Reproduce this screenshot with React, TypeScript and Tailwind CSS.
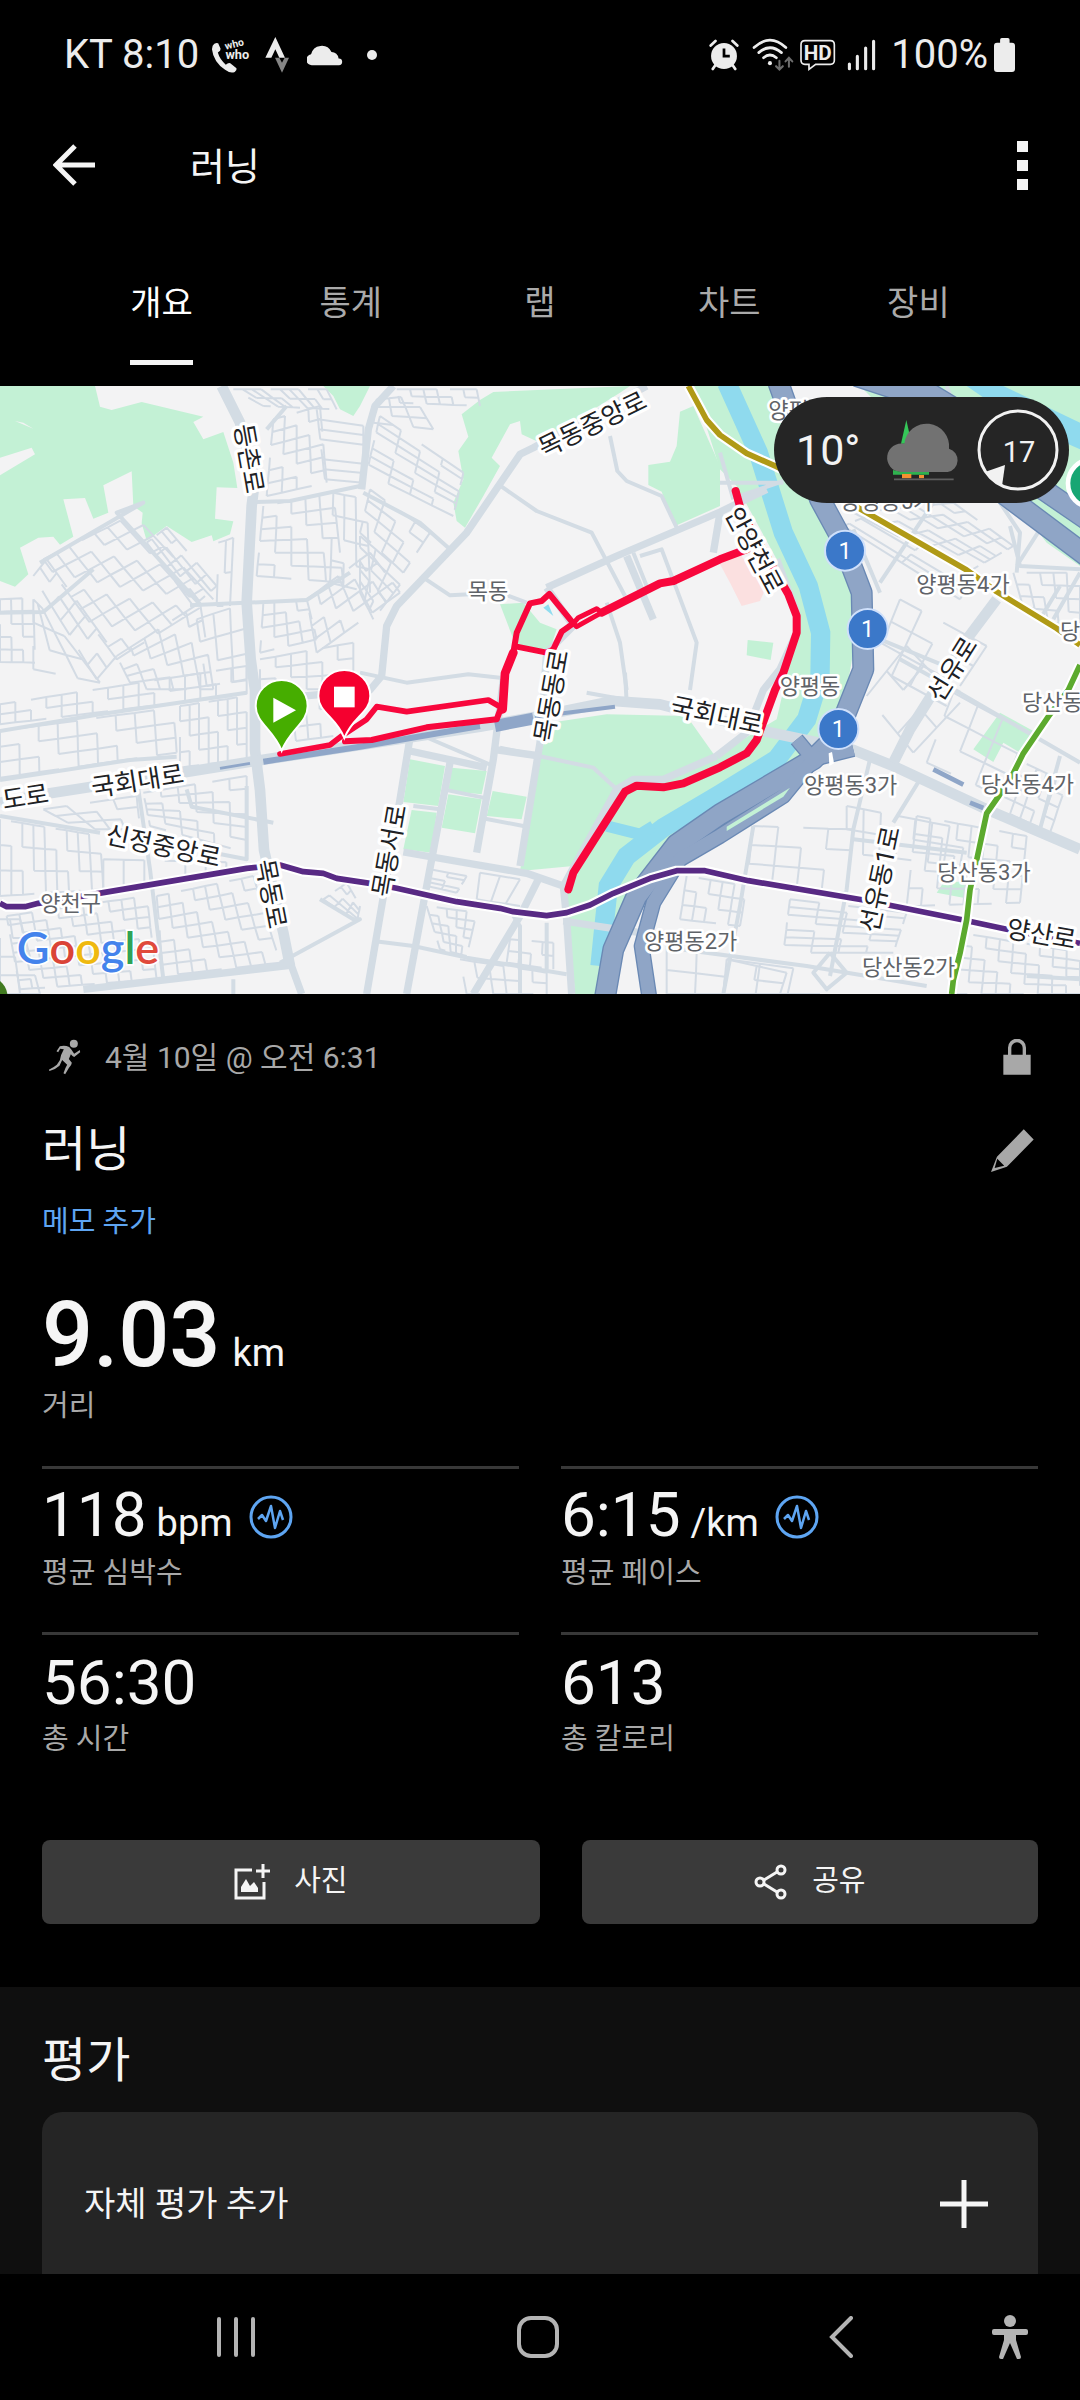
import type { ReactNode } from 'react';

type Point = [number, number];

interface StreetBlock {
  corners: [Point, Point, Point, Point];
  cols: number;
  rows: number;
}

interface MapLabel {
  text: string;
  x: number;
  y: number;
  rotate?: number;
  start?: boolean;
}

const TABS = ['개요', '통계', '랩', '차트', '장비'];

const STATS = [
  { value: '118', unit: 'bpm', label: '평균 심박수', chart: true },
  { value: '6:15', unit: '/km', label: '평균 페이스', chart: true },
  { value: '56:30', unit: '', label: '총 시간', chart: false },
  { value: '613', unit: '', label: '총 칼로리', chart: false },
];

// 골목길 블록: 좌상, 우상, 우하, 좌하 순서
const BLOCKS: StreetBlock[] = [
  { corners: [[130, 520], [400, 385], [640, 640], [350, 820]], cols: 7, rows: 8 },
  { corners: [[100, 570], [140, 520], [350, 810], [290, 880]], cols: 2, rows: 7 },
  { corners: [[350, 810], [600, 650], [640, 910], [400, 910]], cols: 6, rows: 5 },
  { corners: [[0, 640], [100, 635], [105, 830], [0, 828]], cols: 3, rows: 5 },
  { corners: [[100, 640], [140, 680], [300, 890], [100, 850]], cols: 3, rows: 3 },
  { corners: [[440, 470], [500, 425], [650, 600], [580, 660]], cols: 4, rows: 5 },
  { corners: [[655, 470], [700, 455], [690, 660], [650, 660]], cols: 2, rows: 2 },
  { corners: [[590, 700], [740, 650], [740, 880], [620, 900]], cols: 3, rows: 3 },
  { corners: [[700, 10], [980, 10], [1010, 70], [790, 60]], cols: 10, rows: 2 },
  { corners: [[820, 100], [960, 60], [980, 290], [800, 330]], cols: 4, rows: 6 },
  { corners: [[950, 70], [1090, 90], [1090, 290], [975, 280]], cols: 1, rows: 7 },
  { corners: [[790, 360], [1000, 320], [1030, 590], [770, 570]], cols: 5, rows: 6 },
  { corners: [[1000, 320], [1100, 340], [1110, 620], [990, 590]], cols: 3, rows: 4 },
  { corners: [[790, 650], [920, 640], [950, 760], [780, 800]], cols: 4, rows: 4 },
  { corners: [[920, 640], [1110, 500], [1200, 620], [950, 800]], cols: 6, rows: 4 },
  { corners: [[780, 820], [1060, 770], [1060, 910], [780, 910]], cols: 6, rows: 3 },
  { corners: [[1140, 90], [1390, 260], [1360, 390], [1100, 260]], cols: 4, rows: 7 },
  { corners: [[1190, 10], [1430, 10], [1440, 60], [1200, 50]], cols: 6, rows: 2 },
  { corners: [[1130, 40], [1240, 30], [1300, 130], [1120, 110]], cols: 3, rows: 3 },
  { corners: [[1110, 310], [1290, 440], [1210, 560], [1080, 440]], cols: 4, rows: 4 },
  { corners: [[1080, 450], [1220, 570], [1120, 700], [1080, 620]], cols: 3, rows: 5 },
  { corners: [[0, 955], [740, 840], [740, 925], [0, 1015]], cols: 16, rows: 2 },
  { corners: [[0, 1035], [520, 965], [530, 1100], [0, 1175]], cols: 9, rows: 3 },
  { corners: [[540, 960], [740, 930], [740, 1120], [540, 1145]], cols: 7, rows: 4 },
  { corners: [[130, 1270], [410, 1230], [420, 1330], [240, 1330]], cols: 4, rows: 3 },
  { corners: [[430, 1220], [740, 1170], [740, 1400], [450, 1320]], cols: 6, rows: 6 },
  { corners: [[0, 1300], [300, 1350], [310, 1510], [0, 1530]], cols: 9, rows: 3 },
  { corners: [[310, 1420], [740, 1430], [740, 1440], [310, 1510]], cols: 7, rows: 1 },
  { corners: [[20, 1590], [440, 1530], [470, 1780], [60, 1810]], cols: 11, rows: 8 },
  { corners: [[470, 1530], [760, 1470], [840, 1730], [490, 1770]], cols: 8, rows: 7 },
  { corners: [[830, 950], [1000, 920], [1000, 1050], [850, 1070]], cols: 4, rows: 3 },
  { corners: [[970, 1540], [1040, 1490], [1080, 1560], [1070, 1610]], cols: 4, rows: 3 },
  { corners: [[1290, 1450], [1400, 1470], [1370, 1520], [1280, 1500]], cols: 2, rows: 4 },
  { corners: [[1280, 1560], [1430, 1580], [1400, 1710], [1320, 1690]], cols: 5, rows: 5 },
  { corners: [[1440, 1460], [1620, 1490], [1560, 1560], [1430, 1540]], cols: 3, rows: 1 },
  { corners: [[1530, 1660], [1660, 1670], [1660, 1750], [1520, 1730]], cols: 4, rows: 2 },
  { corners: [[1380, 1720], [1640, 1760], [1640, 1824], [1400, 1824]], cols: 6, rows: 2 },
  { corners: [[2560, 380], [2860, 350], [3040, 480], [2900, 560]], cols: 8, rows: 5 },
  { corners: [[2530, 420], [2600, 390], [2920, 570], [2880, 640]], cols: 4, rows: 2 },
  { corners: [[3040, 560], [3240, 560], [3240, 720], [3080, 700]], cols: 5, rows: 4 },
  { corners: [[2700, 640], [2960, 780], [2840, 960], [2620, 840]], cols: 4, rows: 3 },
  { corners: [[2600, 930], [2720, 780], [2880, 950], [2740, 1100]], cols: 2, rows: 3 },
  { corners: [[2860, 920], [3080, 1040], [3000, 1230], [2780, 1130]], cols: 3, rows: 3 },
  { corners: [[3050, 1120], [3200, 1190], [3150, 1340], [3000, 1270]], cols: 5, rows: 4 },
  { corners: [[2540, 1260], [2900, 1330], [2880, 1440], [2540, 1400]], cols: 7, rows: 2 },
  { corners: [[2750, 1290], [3080, 1350], [3060, 1550], [2720, 1560]], cols: 8, rows: 5 },
  { corners: [[2260, 1320], [2560, 1330], [2540, 1520], [2240, 1490]], cols: 4, rows: 3 },
  { corners: [[2060, 1470], [2240, 1500], [2220, 1620], [2040, 1600]], cols: 5, rows: 3 },
  { corners: [[2370, 1540], [2720, 1580], [2680, 1700], [2350, 1700]], cols: 4, rows: 7 },
  { corners: [[2000, 1680], [2360, 1760], [2340, 1824], [2000, 1824]], cols: 4, rows: 2 },
  { corners: [[2880, 1640], [3240, 1700], [3240, 1824], [2860, 1824]], cols: 9, rows: 5 },
  { corners: [[2180, 1720], [2480, 1760], [2460, 1824], [2170, 1824]], cols: 3, rows: 1 },
  { corners: [[0, 1600], [60, 1600], [120, 1824], [0, 1824]], cols: 2, rows: 4 },
];

const MID_ROADS = [
  'M0 1035 L300 985 L740 920',
  'M0 1182 L390 1122 L530 1112',
  'M0 1290 L300 1340',
  'M415 1210 L450 1450 L490 1780',
  'M560 1210 L575 1262 L820 1310',
  'M740 1200 L740 1420 L640 1400',
  'M770 348 L870 345 L1080 300',
  'M800 130 L860 60',
  'M570 658 L920 642 L1050 560',
  'M120 530 L430 350 L350 380 L600 655',
  'M0 680 L130 678 L280 550',
  'M1090 320 L1260 410 L1350 490',
  'M1505 302 L1610 375 L1775 440 L1875 630 M1820 650 L1860 770 L1880 912',
  'M1830 150 L1852 255 L1880 285 L1985 330 L2030 425',
  'M1270 575 L1350 628 L1500 620 L1580 650',
  'M1080 860 L1220 890 L1405 865 L1500 875',
  'M1900 500 L1940 600 M1920 510 L1985 490 L2090 770 L2070 912',
  'M840 1730 L1080 1600 L1060 1600 L960 1540',
  'M700 1780 L700 1824 M1640 1610 L1640 1750',
  'M1120 1665 L1240 1680 L1400 1715 L1700 1765',
  'M1760 920 L1880 942 M1875 860 L1880 950',
  'M1240 1260 L1320 1270 M1270 1050 L1480 1140',
  'M1440 1295 L1570 1320 M1330 1210 L1450 1235 M1500 1085 L1780 1145 L1850 1210 L1920 1180',
  'M1540 1590 L1560 1620 L1560 1830',
  'M2160 290 L2350 290 M2160 200 L2200 340 M2220 330 L2350 285',
  'M2640 590 L2800 350 M2640 620 L2560 430',
  'M2640 760 L2860 850',
  'M2840 0 L2870 80',
  'M3030 420 L3060 540 L3240 550 M3050 540 L3120 430 M3000 350 L3060 440 L3050 560',
  'M3160 700 L3240 560 M3120 700 L3180 600',
  'M2860 910 L3240 1130 M2880 920 L2700 820',
  'M2610 1120 L2560 1330 L2540 1510 L2490 1770',
  'M2260 1320 L2220 1560 L2170 1824',
  'M2560 1360 L2900 1400 M2680 1310 L2760 1180',
  'M2040 1690 L2420 1740 L2780 1800',
  'M2490 1700 L2440 1760 L2480 1810 L2540 1760 L2490 1700',
  'M3180 1110 L3120 1330 M3240 1780 L3080 1770',
];

const ROAD_LABELS: MapLabel[] = [
  { text: '등촌로', x: 746, y: 218, rotate: 80 },
  { text: '목동중앙로', x: 1778, y: 116, rotate: -26 },
  { text: '안양천로', x: 2262, y: 494, rotate: 62 },
  { text: '선유로', x: 2858, y: 850, rotate: -58 },
  { text: '목동동로', x: 1656, y: 930, rotate: -80 },
  { text: '국회대로', x: 2150, y: 990, rotate: 12 },
  { text: '도로', x: 76, y: 1234, rotate: -9 },
  { text: '국회대로', x: 413, y: 1186, rotate: -9 },
  { text: '신정중앙로', x: 490, y: 1382, rotate: 12 },
  { text: '목동로', x: 812, y: 1524, rotate: 79 },
  { text: '목동서로', x: 1170, y: 1394, rotate: -80 },
  { text: '선유동1로', x: 2642, y: 1480, rotate: -78 },
  { text: '양산로', x: 3124, y: 1646, rotate: 10 },
];

const AREA_LABELS: MapLabel[] = [
  { text: '목동', x: 1464, y: 616 },
  { text: '양평동6가', x: 2305, y: 72, start: true },
  { text: '양평동5가', x: 2660, y: 345 },
  { text: '양평동4가', x: 2889, y: 594 },
  { text: '양평동', x: 2430, y: 900 },
  { text: '양평동3가', x: 2552, y: 1197 },
  { text: '양평동2가', x: 2072, y: 1666 },
  { text: '당', x: 3180, y: 735, start: true },
  { text: '당산동', x: 3066, y: 948, start: true },
  { text: '당산동4가', x: 3082, y: 1195 },
  { text: '당산동3가', x: 2952, y: 1460 },
  { text: '당산동2가', x: 2726, y: 1744 },
  { text: '양천구', x: 212, y: 1552 },
];

const SHIELDS: Point[] = [[2535, 494], [2603, 729], [2515, 1029]];

const lerp = (a: Point, b: Point, t: number): Point => [
  a[0] + (b[0] - a[0]) * t,
  a[1] + (b[1] - a[1]) * t,
];

const blockPath = ({ corners: [tl, tr, br, bl], cols, rows }: StreetBlock) => {
  const at = (i: number, j: number) => {
    const [x, y] = lerp(lerp(tl, tr, i / cols), lerp(bl, br, i / cols), j / rows);
    return `${Math.round(x)} ${Math.round(y)}`;
  };
  // 격자가 너무 규칙적으로 보이지 않게 일부 구간은 건너뛴다
  const skip = (i: number, j: number, k: number) => (i * 7 + j * 13 + k * 5 + cols * 3) % 4 === 0;

  let d = '';
  for (let j = 0; j <= rows; j++) {
    for (let i = 0; i <= cols; i++) {
      if (i < cols && !skip(i, j, 1)) d += `M${at(i, j)}L${at(i + 1, j)}`;
      if (j < rows && !skip(i, j, 2)) d += `M${at(i, j)}L${at(i, j + 1)}`;
    }
  }
  return d;
};

function Label({ label, road }: { label: MapLabel; road?: boolean }) {
  return (
    <text
      x={label.x}
      y={label.y}
      transform={label.rotate ? `rotate(${label.rotate} ${label.x} ${label.y})` : undefined}
      textAnchor={label.start ? 'start' : 'middle'}
      dominantBaseline="central"
      fontSize={road ? 76 : 66}
      fill={road ? '#202124' : '#5f6368'}
      stroke="#ffffff"
      strokeWidth={road ? 20 : 16}
      strokeLinejoin="round"
      paintOrder="stroke"
    >
      {label.text}
    </text>
  );
}

function RouteMap() {
  return (
    <svg
      viewBox="0 0 3240 1824"
      preserveAspectRatio="xMidYMid slice"
      className="block h-[608px] w-full"
      role="img"
      aria-label="러닝 경로 지도"
    >
      <rect width="3240" height="1824" fill="#f3f3f4" />

      {/* 공원 */}
      <g fill="#c3f1d5">
        <path d="M0 0H285L300 62L335 72L425 48L610 92L580 108L610 160L670 138L700 230L712 306L650 304L645 398L700 406L690 445L640 466L635 448L575 468L500 420L440 464L425 412L428 380L400 360L395 256L310 298L325 380L280 398L255 336L190 340L220 452L180 476L160 452L115 455L60 485L85 565L45 602L0 585Z" />
        <path d="M970 0H1110L1080 60L1060 90L1020 70L1000 30Z" />
        <path d="M1890 0L1480 18L1440 42L1385 85L1405 152L1375 195L1390 280L1360 350L1370 405L1395 425L1450 330L1500 240L1475 215L1530 115L1560 105L1565 145L1620 170L1860 20Z" />
        <path d="M2080 0H2330L2450 347L2560 617V797L2540 912L2460 1080L2400 1200L2160 1360L1990 1480L1880 1620L1830 1824H1725L1700 1520L1720 1440L1560 1455L1620 1110L1650 1010L1820 985L2060 990L2145 1110L2330 1000L2390 740V680L2330 520L2210 300L2160 250Z" />
        <path d="M2040 77L2080 60L2160 240V360L2025 420L1985 317L1945 297V237L2010 227L2030 180Z" />
        <path d="M2580 0H3240V540L3140 470L2880 130L2640 60Z" />
        <path d="M1230 1120L1335 1140L1315 1260L1210 1248Z M1355 1145L1460 1155L1445 1225L1345 1215Z M1345 1225L1445 1240L1425 1342L1325 1325Z M1478 1215L1580 1232L1565 1300L1460 1290Z M1235 1272L1310 1280L1295 1400L1210 1390Z" />
        <path d="M1500 655L1570 650L1620 710L1670 730L1650 790L1550 785Z" />
        <path d="M2243 762L2320 770L2312 822L2240 808Z" />
        <path d="M3000 980L3100 1035L3060 1100L3010 1070L2980 1128L2920 1090Z M2830 1490L2910 1485L2890 1535L2810 1520Z" />
      </g>
      <path d="M0 215L95 185L105 205L0 268Z M45 105L70 110L100 128Z" fill="#f3f3f4" />
      <path d="M2160 535L2215 500L2250 540L2300 600L2280 645L2225 660L2190 590Z" fill="#fbe0e0" />
      <path d="M1630 665L1645 655L1660 690Z" fill="#8fdcef" />

      {/* 하천 */}
      <path d="M2180 -10L2275 200L2350 440L2425 600L2462 740L2460 870L2420 1000L2330 1120L2160 1225L1990 1325L1880 1410L1825 1500L1810 1640L1800 1740" fill="none" stroke="#8fdaee" strokeWidth="58" />
      <path d="M1820 1320L1920 1345L1960 1320" fill="none" stroke="#8fdaee" strokeWidth="34" />
      <path d="M2900 0H3010L3240 110V190L3060 110Z" fill="#8fdaee" />

      {/* 골목길 */}
      <g fill="none" stroke="#d3dbe4" strokeWidth="6" strokeLinejoin="round">
        {BLOCKS.map((block, index) => (
          <path key={index} d={blockPath(block)} />
        ))}
      </g>

      {/* 일반 도로 */}
      <g fill="none" stroke="#d3dce4" strokeLinejoin="round">
        <g strokeWidth="12">
          {MID_ROADS.map(d => (
            <path key={d} d={d} />
          ))}
        </g>
        <g strokeWidth="22">
          <path d="M1180 0L1125 60L1105 130L1085 310" />
          <path d="M1940 0L1600 185L1560 205L1400 440L1190 660L1160 720L1145 870L1110 912L800 940" />
          <path d="M1640 605L1850 510L2160 378L2300 310" />
          <path d="M1640 605L1720 720L1640 800L1620 1070L1560 1440" />
          <path d="M1230 1055L1200 1240L1100 1824" />
          <path d="M1510 880L1480 1120L1430 1400M1350 1130L1280 1500L1220 1824" />
          <path d="M1230 1095L1460 1145M1480 1090L1620 1110" />
          <path d="M1210 1398L1580 1462L1690 1500L1700 1600L1715 1824" />
          <path d="M1620 1470L1560 1590L1420 1824" />
          <path d="M1690 1500L1850 1210L1900 1180L1990 1180L2150 1110" />
          <path d="M2140 500L2160 380M2330 520L2390 680V740L2340 850L2290 912L2240 1040L2150 1110" />
          <path d="M1690 1605L1920 1640L2000 1650M1880 510L1960 700" />
          <path d="M250 1810L870 1738M860 1700L905 1824" />
        </g>
        <g strokeWidth="32">
          <path d="M665 0L720 110L765 280L755 360L740 650L752 820L765 912V1092L780 1212L792 1392L850 1640L870 1740" />
          <path d="M0 1250L150 1222L560 1158L760 1126L1440 1022L1620 990L1840 945L1980 955L2290 1035L2560 1092L2680 1140L2960 1270L3240 1390" />
          <path d="M2990 640L2900 760L2730 1030L2680 1130" />
        </g>
      </g>

      {/* 고속화도로 */}
      <g fill="none" stroke="#8fa6c8">
        <path d="M660 1147L750 1132" strokeWidth="8" />
        <path d="M790 1127L1080 1082L1440 1020" strokeWidth="18" />
        <path d="M1485 1020L1600 998" strokeWidth="36" />
        <path d="M1605 992L1845 962" strokeWidth="12" />
        <path d="M2800 1150L2890 1196M2910 1250L2950 1266" strokeWidth="14" />
      </g>
      {[
        { color: '#6a89b4', width: 66 },
        { color: '#8fa5c6', width: 58 },
      ].map(({ color, width }) => (
        <g key={color} fill="none" stroke={color} strokeWidth={width} strokeLinejoin="round">
          <path d="M2335 -10L2460 340L2520 450L2585 620L2590 850L2510 1050L2440 1120L2160 1285L2030 1375L1910 1530L1840 1690L1815 1834" />
          <path d="M2440 1120L2350 1230L2160 1350L2040 1420L1960 1550L1925 1680L1948 1834" strokeWidth={width - 18} />
          <path d="M2570 -30L2720 20L2980 300L3260 510" />
          <path d="M2720 -20L2900 90L3100 290L3260 400" />
          <path d="M2390 1060L2440 1120L2560 1090" strokeWidth={width - 20} />
        </g>
      ))}
      <path d="M2180 1322L2370 1205L2350 1232L2180 1335Z" fill="#c3f1d5" />
      <path d="M2486 1102L2496 1098L2502 1132L2488 1140Z" fill="#ffffff" />

      {/* 지하철 노선 */}
      <g fill="none" strokeLinejoin="round">
        {[
          { d: 'M2065 0L2120 102L2160 147L2240 202L2330 242L2560 357L2900 552L2990 617L3170 727L3240 777', color: '#b09a16' },
          { d: 'M0 1552L20 1562H75L115 1552L310 1520L740 1447L840 1437L910 1457L970 1462L1010 1477L1110 1492L1190 1507L1370 1547L1500 1567L1540 1577L1640 1589L1700 1580L1770 1557L1840 1522L1950 1477L2030 1454H2115L2245 1484L2590 1542L2890 1602L3020 1630L3240 1672', color: '#582a84' },
          { d: 'M3240 837L3205 912L3145 992L3070 1102L3040 1162L2995 1232L2960 1282L2945 1352L2930 1422L2910 1512L2900 1602L2880 1702L2860 1782L2855 1824', color: '#5caa2e' },
        ].map(({ d, color }) => (
          <g key={color}>
            <path d={d} stroke="#ffffff" strokeWidth="30" />
            <path d={d} stroke={color} strokeWidth="17" />
          </g>
        ))}
      </g>

      {/* 러닝 경로 */}
      <g fill="none" stroke="#f8073c" strokeLinecap="round" strokeLinejoin="round">
        <path d="M840 1104L990 1077L1025 1050L1100 1000L1130 962L1220 977L1465 942L1500 962" strokeWidth="17" />
        <path d="M1035 1066L1115 1062L1280 1024L1490 1000L1505 960" strokeWidth="18" />
        <path d="M1508 970L1515 862L1540 800" strokeWidth="26" />
        <path d="M1540 800L1550 740L1590 652L1625 645L1648 624L1720 712L1685 737L1660 790L1640 800L1550 782" strokeWidth="18" />
        <path d="M1720 712L1735 695L1790 668L1805 680L1730 722Z" strokeWidth="15" />
        <path d="M1805 680L1980 592L2020 585L2160 520L2240 490" strokeWidth="24" />
        <path d="M2207 315L2225 380L2365 625L2390 690V740L2350 860L2325 912L2270 1062L2240 1102L2160 1144L2050 1192L1990 1204L1910 1199L1875 1217L1720 1460L1705 1510" strokeWidth="24" />
      </g>

      {ROAD_LABELS.map((label, index) => (
        <Label key={`${label.text}-${index}`} label={label} road />
      ))}
      {AREA_LABELS.map((label, index) => (
        <Label key={`${label.text}-${index}`} label={label} />
      ))}

      {SHIELDS.map(([x, y]) => (
        <g key={`${x}-${y}`}>
          <circle cx={x} cy={y} r="60" fill="#3b78c9" stroke="#cfe0fb" strokeWidth="6" />
          <text x={x} y={y} fontSize="70" fill="#ffffff" textAnchor="middle" dominantBaseline="central">
            1
          </text>
        </g>
      ))}

      {/* 출발 / 도착 핀 */}
      <path d="M845 1094C820 1030 767 1010 767 960A78 78 0 0 1 923 960C923 1010 870 1030 845 1094Z" fill="#46ad00" stroke="#ffffff" strokeWidth="6" />
      <path d="M820 935L888 973L820 1010Z" fill="#ffffff" />
      <path d="M1033 1056C1008 992 955 980 955 930A78 78 0 0 1 1111 930C1111 980 1058 992 1033 1056Z" fill="#f5002f" stroke="#ffffff" strokeWidth="6" />
      <rect x="1002" y="902" width="62" height="62" fill="#ffffff" />

      <circle cx="3276" cy="292" r="72" fill="#17a673" stroke="#ffffff" strokeWidth="14" />
      <path d="M0 1785C12 1795 20 1808 22 1824H0Z" fill="#417a20" />

      <text
        x="50"
        y="1733"
        fontSize="135"
        className="font-[Lato,sans-serif]"
        stroke="#ffffff"
        strokeWidth="10"
        paintOrder="stroke"
        fontWeight="600"
      >
        <tspan fill="#4483ec">G</tspan>
        <tspan fill="#da4437">o</tspan>
        <tspan fill="#efb90f">o</tspan>
        <tspan fill="#4483ec">g</tspan>
        <tspan fill="#2fa355">l</tspan>
        <tspan fill="#e04a3c">e</tspan>
      </text>
    </svg>
  );
}

function WeatherWidget() {
  return (
    <div className="absolute right-[11px] top-[11px] flex h-[106px] w-[295px] items-center rounded-full bg-[#252525] pl-[22px] pr-2.5 text-[#f2f2f2]">
      <span className="text-[43px]">10°</span>
      <svg viewBox="498 98 228 192" className="ml-auto h-16 w-[76px]" aria-hidden="true">
        <path d="M562 104L578 175H546Z" fill="#35c759" />
        <path d="M544 260A43 43 0 1 1 556 175A67 67 0 0 1 690 190A36 36 0 0 1 686 260Z" fill="#727272" />
        <path d="M522 254L545 260H630V268H522Z" fill="#2fb24f" />
        <path d="M549 266H577V279H549Z M600 269H615V279H600Z" fill="#f59131" />
        <path d="M525 282H704" stroke="#5f5f5f" strokeWidth="5" />
      </svg>
      <svg viewBox="0 0 82 82" className="ml-4 size-[82px]" role="img" aria-label="풍속 17">
        <circle cx="41" cy="41" r="39" fill="none" stroke="#f2f2f2" strokeWidth="3" />
        <path d="M28 56L8 63Q14 73 25 77Z" fill="#f2f2f2" />
        <text x="42" y="43" fontSize="29" fill="#f2f2f2" textAnchor="middle" dominantBaseline="central">
          17
        </text>
      </svg>
    </div>
  );
}

function StatusBar() {
  return (
    <div className="flex h-[110px] items-center pl-16 pr-[65px] text-[40px] text-[#ececec]">
      <span>KT 8:10</span>
      <svg viewBox="606 110 120 110" className="ml-3 h-[38px] w-[42px]" fill="#ececec" aria-hidden="true">
        <path d="M610 138Q616 127 626 131L633 147Q634 153 625 158Q630 177 648 193Q655 187 661 189L679 203Q681 207 674 214Q662 220 646 208Q612 184 608 148Z" />
        <text x="648" y="150" fontSize="30" fontWeight="700" transform="rotate(-14 648 150)">who</text>
        <text x="647" y="176" fontSize="37" fontWeight="700">who</text>
      </svg>
      <svg viewBox="762 112 72 108" className="ml-[12px] h-9 w-6" aria-hidden="true">
        <path d="M793 112L822 174H805L793 149L781 174H763Z" fill="#ececec" />
        <path d="M792 174H805L813 189L821 174H834L813 219Z" fill="#858585" />
      </svg>
      <svg viewBox="884 130 106 64" className="ml-[18px] h-[22px] w-9" fill="#ececec" aria-hidden="true">
        <path d="M900 192A16 16 0 0 1 896 160A32 32 0 0 1 956 153A21 21 0 0 1 977 172A10 10 0 0 1 978 192Z" />
      </svg>
      <span className="ml-6 size-[10px] rounded-full bg-[#ececec]" />

      <svg viewBox="489 118 88 92" className="ml-auto h-8 w-[30px]" fill="#ececec" aria-hidden="true">
        <circle cx="533" cy="167" r="38" />
        <path d="M494 136L508 123M572 136L558 123M508 193L500 205M558 193L566 205" stroke="#ececec" strokeWidth="8" strokeLinecap="round" />
        <path d="M533 145V167H550" fill="none" stroke="#000000" strokeWidth="8" />
      </svg>
      <svg viewBox="614 114 124 100" className="ml-[13px] h-[34px] w-[42px]" fill="none" strokeLinecap="round" aria-hidden="true">
        <path d="M620 142Q667 98 714 142M634 157Q667 128 701 157M648 172Q667 156 686 172" stroke="#ececec" strokeWidth="8" />
        <circle cx="667" cy="188" r="6" fill="#ececec" />
        <path d="M695 181V206M685 197L695 207L705 197M723 199V173M713 183L723 172L733 183" stroke="#6d6d6d" strokeWidth="6" />
      </svg>
      <svg viewBox="755 118 108 94" className="ml-[6px] h-8 w-9" aria-hidden="true">
        <path d="M770 122H846Q858 122 858 134V181Q858 193 846 193H802L782 208V193H770Q758 193 758 181V134Q758 122 770 122Z" fill="none" stroke="#ececec" strokeWidth="5" />
        <text x="808" y="181" fontSize="62" fontWeight="700" fill="#ececec" textAnchor="middle">HD</text>
      </svg>
      <svg viewBox="893 118 84 92" className="ml-[11px] h-8 w-[29px]" stroke="#ececec" strokeWidth="9" strokeLinecap="round" aria-hidden="true">
        <path d="M900 190V204M923 168V204M947 144V204M970 124V204" />
      </svg>
      <span className="ml-[15px]">100%</span>
      <svg viewBox="1317 113 62 100" className="ml-[6px] h-[34px] w-[21px]" fill="#ececec" aria-hidden="true">
        <path d="M1335 127V118Q1335 113 1340 113H1358Q1363 113 1363 118V127H1370Q1379 127 1379 136V204Q1379 213 1370 213H1326Q1317 213 1317 204V136Q1317 127 1326 127Z" />
      </svg>
    </div>
  );
}

function Header() {
  return (
    <header className="flex h-[110px] items-center pl-[53px] pr-[46px]">
      <button type="button" aria-label="뒤로">
        <svg viewBox="0 0 42 42" className="size-[42px]" fill="none" stroke="#f5f5f5" strokeWidth="5" aria-hidden="true">
          <path d="M42 21H4M22 2L3 21L22 40" />
        </svg>
      </button>
      <h1 className="ml-[95px] pt-1 text-[38px] leading-[60px]">러닝</h1>
      <button type="button" aria-label="더보기" className="ml-auto flex flex-col gap-2 px-1.5">
        <span className="size-[11px] bg-[#f5f5f5]" />
        <span className="size-[11px] bg-[#f5f5f5]" />
        <span className="size-[11px] bg-[#f5f5f5]" />
      </button>
    </header>
  );
}

function Tabs() {
  return (
    <div role="tablist" className="grid grid-cols-5 px-[67px] pb-[21px] pt-14">
      {TABS.map((tab, index) => (
        <button
          key={tab}
          type="button"
          role="tab"
          aria-selected={index === 0}
          className={`mx-auto border-b-[5px] pb-[30px] text-[34px] leading-[54px] ${
            index === 0 ? 'border-[#f5f5f5] text-white' : 'border-transparent text-[#aaaaaa]'
          }`}
        >
          {tab}
        </button>
      ))}
    </div>
  );
}

function RunnerIcon() {
  return (
    <svg viewBox="136 116 98 108" className="h-9 w-[33px]" fill="#a8a8a8" aria-hidden="true">
      <circle cx="213" cy="130" r="12" />
      <path d="M171 138Q186 134 199 140L206 148L214 160L231 149L232 156L214 170Q209 169 204 162L198 176L207 187Q207 193 198 203L187 222L182 219Q187 202 193 193L178 179L170 196Q158 207 140 212L138 208Q154 200 162 193L171 180Q174 162 183 147L172 145L166 156L161 153Z" />
    </svg>
  );
}

function ChartBadge() {
  return (
    <button type="button" aria-label="차트 보기" className="ml-4">
      <svg viewBox="0 0 44 44" className="size-11" fill="none" stroke="#5ea5f2" strokeWidth="3" aria-hidden="true">
        <circle cx="22" cy="22" r="20" />
        <path d="M9 24L13 20L17 26L22 11L26 33L31 16L34 25" strokeLinejoin="round" strokeWidth="2.5" />
      </svg>
    </button>
  );
}

function ActionButton({ icon, children }: { icon: ReactNode; children: ReactNode }) {
  return (
    <button
      type="button"
      className="flex h-[84px] items-center justify-center gap-6 rounded-lg bg-[#3a3a3a] text-[29px] text-[#f5f5f5]"
    >
      {icon}
      {children}
    </button>
  );
}

function Summary() {
  return (
    <section className="px-[42px] pb-[63px] pt-9">
      <div className="flex h-[54px] items-center pl-1.5 pr-[7px] text-[#a8a8a8]">
        <RunnerIcon />
        <span className="ml-6 text-[30px]">4월 10일 @ 오전 6:31</span>
        <svg viewBox="310 117 82 108" className="ml-auto h-9 w-7" fill="#a8a8a8" role="img" aria-label="비공개">
          <path d="M310 164H324V143A27 27 0 0 1 378 143V164H392V224H310Z M334 164H368V144A17 17 0 0 0 334 144Z" fillRule="evenodd" />
        </svg>
      </div>

      <div className="mt-7 flex h-[76px] items-center justify-between pr-1">
        <h2 className="text-[48px]">러닝</h2>
        <button type="button" aria-label="수정">
          <svg viewBox="270 374 130 130" className="size-[43px]" fill="#a8a8a8" aria-hidden="true">
            <path d="M369 375L399 406L318 488L270 504L288 458Z M289 464L281 492L310 485Z" fillRule="evenodd" />
          </svg>
        </button>
      </div>
      <a href="#memo" className="mt-2.5 block h-12 text-[29px] leading-[48px] text-[#5ea5f2]">
        메모 추가
      </a>

      <p className="mt-11 flex h-[92px] items-baseline text-[#f5f5f5]">
        <span className="text-[90px] font-medium leading-[92px]">9.03</span>
        <span className="ml-3 text-[38px]">km</span>
      </p>
      <p className="text-[29px] leading-[48px] text-[#a8a8a8]">거리</p>

      <div className="mt-9 grid grid-cols-2 gap-x-[42px]">
        {STATS.map(({ value, unit, label, chart }) => (
          <div key={label} className="h-[166px] border-t-[3px] border-[#383838] pt-4">
            <div className="flex h-16 items-center">
              <p className="flex items-baseline text-[#f5f5f5]">
                <span className="text-[62px] leading-[64px]">{value}</span>
                {unit && <span className="ml-2.5 text-[38px]">{unit}</span>}
              </p>
              {chart && <ChartBadge />}
            </div>
            <p className="text-[29px] leading-[48px] text-[#a8a8a8]">{label}</p>
          </div>
        ))}
      </div>

      <div className="mt-[42px] grid grid-cols-[12fr_11fr] gap-[42px]">
        <ActionButton
          icon={
            <svg viewBox="0 0 36 36" className="size-9" fill="none" stroke="#f5f5f5" strokeWidth="3" aria-hidden="true">
              <path d="M18 6H2V34H30V18M29 0V14M22 7H36" />
              <path d="M7 28V23L12 15L16 22L20 18L24 24V28Z" fill="#f5f5f5" stroke="none" />
            </svg>
          }
        >
          사진
        </ActionButton>
        <ActionButton
          icon={
            <svg viewBox="0 0 34 36" className="h-9 w-[34px]" fill="none" stroke="#f5f5f5" strokeWidth="3" aria-hidden="true">
              <circle cx="6" cy="18" r="4" />
              <circle cx="27" cy="6" r="4" />
              <circle cx="27" cy="30" r="4" />
              <path d="M10 16L23 8M10 20L23 28" />
            </svg>
          }
        >
          공유
        </ActionButton>
      </div>
    </section>
  );
}

function Evaluation() {
  return (
    <section className="bg-[#0f0f0f] px-[42px] pt-9">
      <h2 className="text-[48px] leading-[75px]">평가</h2>
      <button
        type="button"
        className="mt-3.5 flex h-[162px] w-full items-center justify-between rounded-t-[20px] bg-[#252525] pl-[42px] pr-[50px] pt-[22px] text-[34px]"
      >
        자체 평가 추가
        <svg viewBox="0 0 48 48" className="size-12" stroke="#f5f5f5" strokeWidth="5" aria-hidden="true">
          <path d="M24 0V48M0 24H48" />
        </svg>
      </button>
    </section>
  );
}

function NavigationBar() {
  return (
    <nav className="grid h-[126px] grid-cols-[1fr_1fr_1fr_auto] items-center bg-black pl-[85px] pr-[52px] text-[#b4b4b4]">
      <button type="button" aria-label="최근 앱" className="mx-auto">
        <svg viewBox="0 0 40 42" className="h-[42px] w-10" stroke="currentColor" strokeWidth="4" strokeLinecap="round" aria-hidden="true">
          <path d="M3 3V39M20 3V39M37 3V39" />
        </svg>
      </button>
      <button type="button" aria-label="홈" className="mx-auto">
        <svg viewBox="0 0 42 42" className="size-[42px]" fill="none" stroke="currentColor" strokeWidth="4" aria-hidden="true">
          <rect x="2" y="2" width="38" height="38" rx="12" />
        </svg>
      </button>
      <button type="button" aria-label="이전" className="mx-auto">
        <svg viewBox="0 0 24 42" className="h-[42px] w-6" fill="none" stroke="currentColor" strokeWidth="4" strokeLinecap="round" aria-hidden="true">
          <path d="M22 2L3 21L22 40" />
        </svg>
      </button>
      <button type="button" aria-label="접근성">
        <svg viewBox="0 0 36 44" className="h-11 w-9" fill="currentColor" aria-hidden="true">
          <circle cx="18" cy="6" r="6" />
          <path d="M2 14H34Q36 14 36 16V18Q36 20 34 20H24V25L29 42Q29 44 27 44H25L18 28L11 44H9Q7 44 7 42L12 25V20H2Q0 20 0 18V16Q0 14 2 14Z" />
        </svg>
      </button>
    </nav>
  );
}

export default function App() {
  return (
    <div className="flex min-h-screen flex-col overflow-hidden bg-black font-[Roboto,'Noto_Sans_CJK_KR',sans-serif] text-[#f5f5f5]">
      <StatusBar />
      <Header />
      <Tabs />
      <div className="relative">
        <RouteMap />
        <WeatherWidget />
      </div>
      <main>
        <Summary />
        <Evaluation />
      </main>
      <NavigationBar />
    </div>
  );
}
